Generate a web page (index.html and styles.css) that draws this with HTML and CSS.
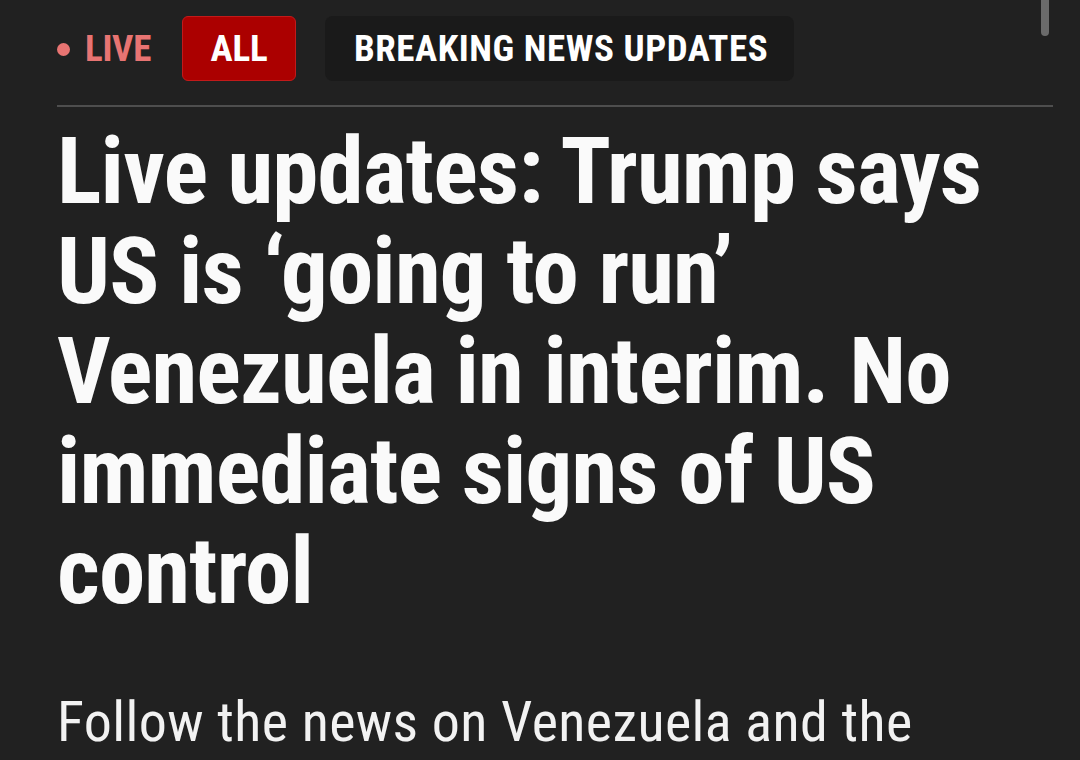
FILE: index.html
```html
<!DOCTYPE html>
<html lang="en">
<head>
<meta charset="utf-8">
<link rel="stylesheet" href="styles.css">
</head>
<body>
<div class="scrollbar"></div>
<main class="page">
  <nav class="tabs">
    <span class="live"><span class="dot"></span>LIVE</span>
    <span class="tab tab-active">ALL</span>
    <span class="tab tab-dark">BREAKING NEWS UPDATES</span>
  </nav>
  <hr class="divider">
  <h1 class="headline">Live updates: Trump says US is ‘going to run’ Venezuela in interim. No immediate signs of US control</h1>
  <p class="summary">Follow the news on Venezuela and the</p>
</main>
</body>
</html>
```
FILE: styles.css
```css
html, body {
  margin: 0;
  padding: 0;
  background: #212121;
  overflow: hidden;
}
body {
  font-family: "Roboto Condensed", Roboto, sans-serif;
  color: #fafafa;
  position: relative;
  height: 760px;
}
.scrollbar {
  position: absolute;
  top: -6px;
  left: 1041px;
  width: 8px;
  height: 42px;
  border-radius: 4px;
  background: #6b6b6b;
}
.page {
  padding: 16px 27px 0 57px;
}
.tabs {
  display: flex;
  align-items: center;
  height: 65px;
}
.live {
  display: flex;
  align-items: center;
  color: #e87472;
  font-weight: 700;
  font-size: 37px;
  letter-spacing: -0.3px;
  margin-right: 31px;
}
.dot {
  width: 13px;
  height: 13px;
  border-radius: 50%;
  background: #e87472;
  margin: 0 15px 0 0;
  position: relative;
  top: 1px;
}
.tab {
  display: flex;
  align-items: center;
  box-sizing: border-box;
  height: 65px;
  font-weight: 700;
  font-size: 37px;
  color: #ffffff;
  border-radius: 6px;
}
.tab-active {
  background: #ab0000;
  border: 1px solid #c21a1a;
  letter-spacing: -0.2px;
  width: 114px;
  justify-content: center;
  margin-right: 29px;
}
.tab-dark {
  background: #1a1a1a;
  padding: 0 0 0 29px;
  letter-spacing: 0.55px;
  width: 469px;
  border-radius: 8px;
}
.divider {
  border: 0;
  height: 2px;
  background: #4e4e4e;
  margin: 24px 0 0 0;
  width: 996px;
}
.headline {
  margin: 15px 0 0 0;
  font-weight: 700;
  font-size: 93px;
  line-height: 100px;
  letter-spacing: -0.9px;
  color: #fafafa;
  width: 960px;
}
.summary {
  margin: 61px 0 0 0;
  font-weight: 400;
  font-size: 56px;
  line-height: 78px;
  letter-spacing: 0.4px;
  color: #f2f2f2;
  white-space: nowrap;
}
```
